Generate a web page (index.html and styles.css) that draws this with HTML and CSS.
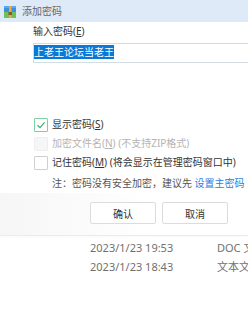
FILE: index.html
```html
<!DOCTYPE html>
<html lang="zh-CN">
<head>
<meta charset="utf-8">
<title>添加密码</title>
<link rel="stylesheet" href="styles.css">
</head>
<body>
<div class="dialog">
  <div class="titlebar">
    <svg class="app-icon" width="12" height="12" viewBox="0 0 12 12">
      <rect x="0" y="0" width="12" height="12" rx="1" fill="#3d8fe0"/>
      <rect x="0" y="6" width="12" height="6" fill="#6fbf5a"/>
      <rect x="0" y="0" width="12" height="2" fill="#5aa8f0"/>
      <rect x="5" y="0" width="2.5" height="12" fill="#f2a93b"/>
      <rect x="4.5" y="6" width="3.5" height="3" fill="#8a5a20"/>
    </svg>
    <span class="title">添加密码</span>
  </div>
  <div class="content">
    <div class="label">输入密码(<u>E</u>)</div>
    <div class="input"><span class="sel">上老王论坛当老王</span></div>
    <div class="options">
      <div class="row">
        <span class="box checked">
          <svg width="10" height="10" viewBox="0 0 10 10"><path d="M1.5 5.2 L4 7.6 L8.6 2.4" fill="none" stroke="#3fae72" stroke-width="1.2"/></svg>
        </span>
        <span class="text">显示密码(<u>S</u>)</span>
      </div>
      <div class="row disabled">
        <span class="box"></span>
        <span class="text">加密文件名(<u>N</u>) (不支持ZIP格式)</span>
      </div>
      <div class="row">
        <span class="box"></span>
        <span class="text">记住密码(<u>M</u>) (将会显示在管理密码窗口中)</span>
      </div>
      <div class="note">注：密码没有安全加密，建议先 <span class="link">设置主密码</span></div>
    </div>
  </div>
  <div class="footer">
    <button class="btn">确认</button>
    <button class="btn">取消</button>
  </div>
</div>
<div class="files">
  <div class="file"><span class="date">2023/1/23 19:53</span><span class="type">DOC 文档</span></div>
  <div class="file"><span class="date">2023/1/23 18:43</span><span class="type">文本文档</span></div>
</div>
</body>
</html>
```
FILE: styles.css
```css
html, body {
  margin: 0;
  padding: 0;
}
body {
  width: 248px;
  height: 333px;
  overflow: hidden;
  background: #ffffff;
  font-family: "Noto Sans", "Noto Sans CJK SC", sans-serif;
  font-size: 10px;
  color: #333333;
  white-space: nowrap;
}
.dialog {
  border-bottom: 1px solid #ececec;
  box-shadow: 0 1px 2px rgba(0,0,0,0.03);
}
.titlebar {
  height: 22px;
  background: #dfeaf9;
  display: flex;
  align-items: center;
  padding-left: 4px;
  gap: 6px;
}
.app-icon {
  display: block;
  margin-top: 1px;
}
.title {
  color: #666666;
  font-size: 10px;
  line-height: 14px;
}
.content {
  padding-left: 33px;
  padding-top: 2px;
}
.label {
  line-height: 14px;
  color: #333333;
}
.input {
  margin-top: 5px;
  height: 20px;
  box-sizing: border-box;
  border: 1px solid #d3dbe3;
  border-right: none;
  padding-top: 1px;
  width: 240px;
}
.sel {
  display: inline-block;
  background: #0b78d7;
  color: #ffffff;
  line-height: 14px;
  height: 14px;
  vertical-align: top;
}
.options {
  margin-top: 52px;
}
.row {
  display: flex;
  align-items: center;
  height: 19px;
  line-height: 19px;
}
.box {
  width: 14px;
  height: 14px;
  box-sizing: border-box;
  border: 1px solid #cfcfcf;
  border-radius: 1px;
  background: #ffffff;
  margin-left: 1px;
  margin-right: 4px;
  display: flex;
  align-items: center;
  justify-content: center;
  flex: none;
}
.box.checked {
  border-color: #7fcfa2;
}
.row.disabled .box {
  border-color: #efefef;
  background: #f6f6f6;
}
.row.disabled .text {
  color: #b4b4b4;
}
.text {
  margin-left: 0;
}
.note {
  margin-top: 2px;
  padding-left: 19px;
  line-height: 19px;
  color: #555555;
}
.link {
  color: #2b7de4;
}
.footer {
  height: 42px;
  box-sizing: border-box;
  padding-top: 9px;
  padding-left: 90px;
  display: flex;
  gap: 6px;
  background: linear-gradient(to right, #f6f6f6, #ffffff 60%);
}
.btn {
  width: 66px;
  height: 22px;
  margin: 0;
  padding: 0;
  border: 1px solid #dcdcdc;
  border-radius: 2px;
  background: #ffffff;
  font-family: "Noto Sans CJK SC", sans-serif;
  font-size: 10px;
  color: #333333;
}
.files {
  padding-top: 2px;
  padding-left: 90px;
}
.file {
  display: flex;
  height: 19px;
  line-height: 19px;
  font-size: 11px;
  color: #707070;
}
.date {
  width: 127px;
  flex: none;
}
.type {
  flex: none;
}
```
